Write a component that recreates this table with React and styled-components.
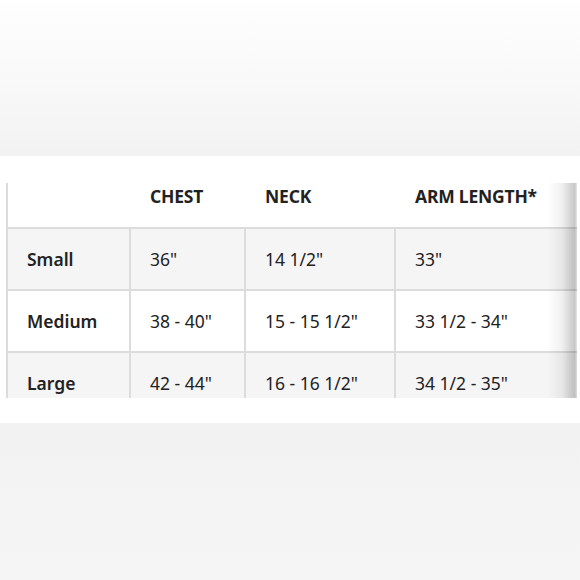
import React from 'react';
import styled, { createGlobalStyle } from 'styled-components';

const GlobalStyle = createGlobalStyle`
  html, body {
    margin: 0;
    padding: 0;
    background: #fff;
  }
  body {
    font-family: "Noto Sans", "Open Sans", sans-serif;
    color: #222;
  }
`;

const Page = styled.div`
  width: 580px;
  height: 580px;
  display: flex;
  flex-direction: column;
  overflow: hidden;
  background: #fff;
`;

const TopBand = styled.div`
  height: 156px;
  flex: none;
  background: linear-gradient(to bottom, #fefefe 0%, #f9f9f9 50%, #f2f2f2 100%);
`;

const Gap = styled.div`
  height: ${p => p.size}px;
  flex: none;
  background: #fff;
`;

const BottomBand = styled.div`
  flex: 1;
  background: linear-gradient(to bottom, #f2f2f2, #f5f5f5);
`;

const TableWrap = styled.div`
  position: relative;
  height: 215px;
  flex: none;
  margin-left: 6px;
  width: 571px;
  overflow: hidden;
  border-left: 2px solid #dcdcdc;
  box-sizing: border-box;
`;

const Row = styled.div`
  display: grid;
  grid-template-columns: 123px 115px 150px 1fr;
  height: ${p => (p.head ? 44 : 60)}px;
  border-bottom: 2px solid #dcdcdc;
  background: ${p => (p.shaded ? '#f5f5f5' : '#fff')};
`;

const Cell = styled.div`
  display: flex;
  align-items: ${p => (p.head ? 'flex-start' : 'center')};
  padding: ${p => (p.head ? '0 0 0 19px' : '0 0 0 19px')};
  font-size: 17.5px;
  font-weight: ${p => (p.head ? 700 : p.label ? 600 : 400)};
  letter-spacing: ${p => (p.head ? '-0.2px' : '0')};
  color: #222;
  white-space: nowrap;
  border-right: ${p => (p.head || p.last ? 'none' : '2px solid #dcdcdc')};
  line-height: 26px;
`;

const Shadow = styled.div`
  position: absolute;
  top: 0;
  right: 0;
  bottom: 0;
  width: 30px;
  background: linear-gradient(to right, rgba(0, 0, 0, 0) 0%, rgba(0, 0, 0, 0.06) 50%, rgba(0, 0, 0, 0.22) 92%, rgba(0, 0, 0, 0.1) 100%);
`;

const head = ['', 'CHEST', 'NECK', 'ARM LENGTH*'];
const rows = [
  ['Small', '36"', '14 1/2"', '33"'],
  ['Medium', '38 - 40"', '15 - 15 1/2"', '33 1/2 - 34"'],
  ['Large', '42 - 44"', '16 - 16 1/2"', '34 1/2 - 35"'],
];

export default function App() {
  return (
    <>
      <GlobalStyle />
      <Page>
        <TopBand />
        <Gap size={27} />
        <TableWrap>
          <Row head>
            {head.map((h, i) => (
              <Cell head key={i}>{h}</Cell>
            ))}
          </Row>
          {rows.map((r, i) => (
            <Row key={r[0]} shaded={i % 2 === 0}>
              {r.map((c, j) => (
                <Cell key={j} label={j === 0} last={j === 3}>{c}</Cell>
              ))}
            </Row>
          ))}
          <Shadow />
        </TableWrap>
        <Gap size={25} />
        <BottomBand />
      </Page>
    </>
  );
}
